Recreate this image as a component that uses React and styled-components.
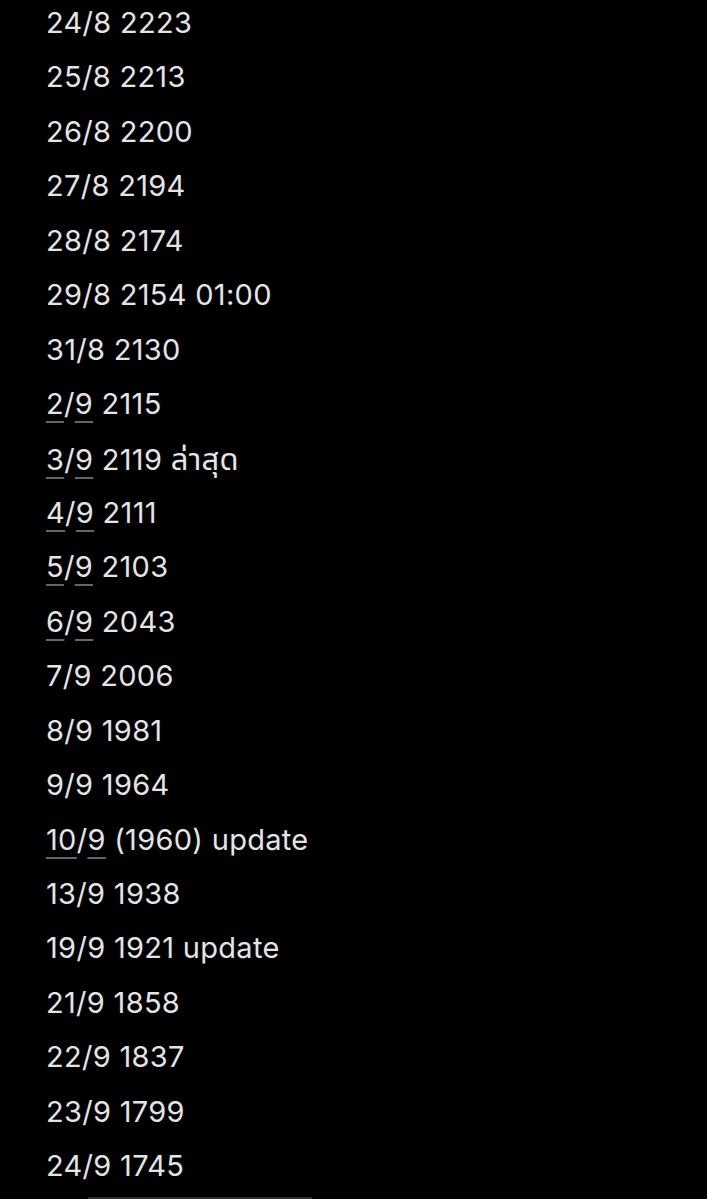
import React from 'react'
import styled, { createGlobalStyle } from 'styled-components'

const Global = createGlobalStyle`
  html, body {
    margin: 0;
    padding: 0;
    background: #000;
  }
  body {
    font-family: Inter, "Noto Sans", "Noto Sans Thai", sans-serif;
  }
`

const Screen = styled.div`
  width: 707px;
  height: 1199px;
  background: #000;
  overflow: hidden;
  display: flex;
  flex-direction: column;
`

const List = styled.div`
  display: flex;
  flex-direction: column;
  padding-left: 46px;
  margin-top: -4px;
`

const Line = styled.div`
  height: 54.45px;
  line-height: 54.45px;
  font-size: 29px;
  color: #e4e4e4;
  white-space: nowrap;
  letter-spacing: 0.3px;
`

const Link = styled.span`
  text-decoration: underline;
  text-decoration-color: #666;
  text-decoration-thickness: 1.5px;
  text-underline-offset: 7px;
`

const Thai = styled.span`
  font-size: 31px;
`

const HomeBar = styled.div`
  margin-top: auto;
  margin-left: 88px;
  width: 224px;
  height: 2px;
  background: #2e2e2e;
  border-radius: 1px;
`

const rows = [
  { d: '24/8', rest: '2223' },
  { d: '25/8', rest: '2213' },
  { d: '26/8', rest: '2200' },
  { d: '27/8', rest: '2194' },
  { d: '28/8', rest: '2174' },
  { d: '29/8', rest: '2154 01:00' },
  { d: '31/8', rest: '2130' },
  { d: '2/9', rest: '2115', link: true },
  { d: '3/9', rest: '2119', note: 'ล่าสุด', link: true },
  { d: '4/9', rest: '2111', link: true },
  { d: '5/9', rest: '2103', link: true },
  { d: '6/9', rest: '2043', link: true },
  { d: '7/9', rest: '2006' },
  { d: '8/9', rest: '1981' },
  { d: '9/9', rest: '1964' },
  { d: '10/9', rest: '(1960) update', link: true },
  { d: '13/9', rest: '1938' },
  { d: '19/9', rest: '1921 update' },
  { d: '21/9', rest: '1858' },
  { d: '22/9', rest: '1837' },
  { d: '23/9', rest: '1799' },
  { d: '24/9', rest: '1745' },
]

function DateText({ d, link }) {
  if (!link) return d
  const [day, month] = d.split('/')
  return (
    <>
      <Link>{day}</Link>/<Link>{month}</Link>
    </>
  )
}

export default function App() {
  return (
    <>
      <Global />
      <Screen>
        <List>
          {rows.map((r, i) => (
            <Line key={i}>
              <DateText d={r.d} link={r.link} /> {r.rest}
              {r.note && <> <Thai>{r.note}</Thai></>}
            </Line>
          ))}
        </List>
        <HomeBar />
      </Screen>
    </>
  )
}
